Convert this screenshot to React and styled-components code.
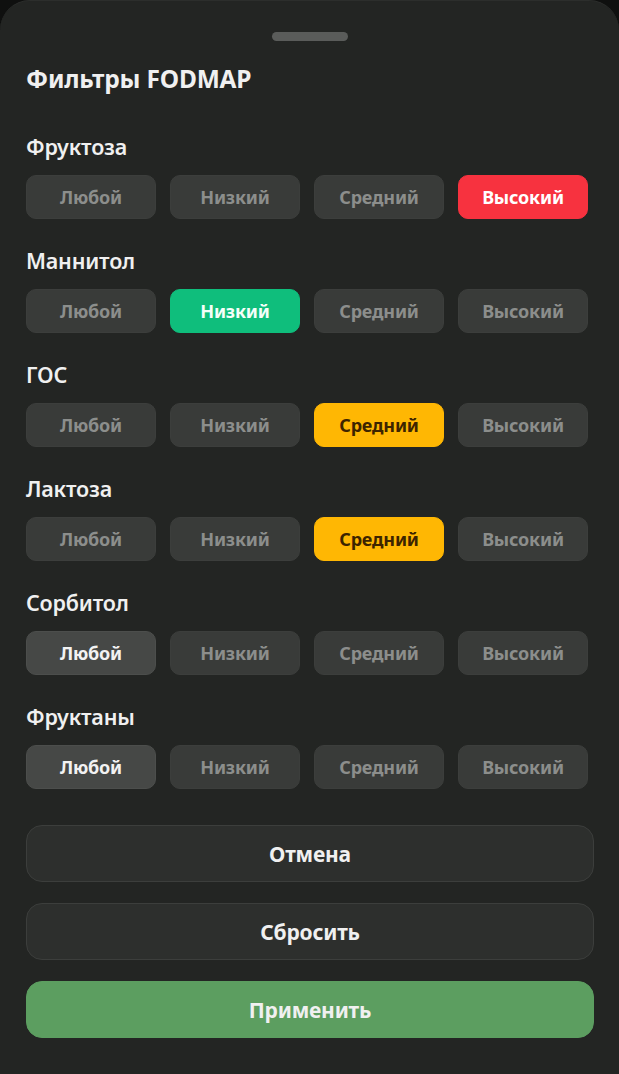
import React from "react";
import styled, { createGlobalStyle } from "styled-components";

const GlobalStyle = createGlobalStyle`
  html, body {
    margin: 0;
    padding: 0;
    background: #0f100f;
  }
  * {
    box-sizing: border-box;
  }
`;

const filters = [
  { name: "Фруктоза", value: "high" },
  { name: "Маннитол", value: "low" },
  { name: "ГОС", value: "mid" },
  { name: "Лактоза", value: "mid" },
  { name: "Сорбитол", value: "any" },
  { name: "Фруктаны", value: "any" },
];

const levels = [
  { key: "any", label: "Любой" },
  { key: "low", label: "Низкий" },
  { key: "mid", label: "Средний" },
  { key: "high", label: "Высокий" },
];

const App = () => (
  <>
    <GlobalStyle />
    <Sheet>
      <Handle />
      <Title>Фильтры FODMAP</Title>
      <Sections>
        {filters.map(f => (
          <Section key={f.name}>
            <Label>{f.name}</Label>
            <Chips>
              {levels.map(l => (
                <Chip key={l.key} tone={f.value === l.key ? l.key : null}>
                  {l.label}
                </Chip>
              ))}
            </Chips>
          </Section>
        ))}
      </Sections>
      <Actions>
        <ActionButton>Отмена</ActionButton>
        <ActionButton>Сбросить</ActionButton>
        <ActionButton primary>Применить</ActionButton>
      </Actions>
    </Sheet>
  </>
);

export default App;

const chipTones = {
  any: `background: #464846; color: #f2f2f2; border-color: #4c4e4c;`,
  low: `background: #0fbe7c; color: #f4fff9; border-color: #0fbe7c;`,
  mid: `background: #ffb703; color: #3d2400; border-color: #ffb703;`,
  high: `background: #f7323f; color: #fff; border-color: #f7323f;`,
};

const Sheet = styled.div`
  min-height: 1074px;
  background: #232523;
  border-radius: 30px 30px 0 0;
  border-top: 1px solid #2c2e2c;
  padding: 31px 25px 30px 26px;
  font-family: "Noto Sans", "Open Sans", sans-serif;
  display: flex;
  flex-direction: column;
`;

const Handle = styled.div`
  align-self: center;
  width: 76px;
  height: 9px;
  border-radius: 5px;
  background: #5a5c5a;
`;

const Title = styled.h1`
  margin: 23px 0 0;
  font-size: 24.5px;
  font-weight: 700;
  line-height: 30px;
  color: #f0f0f0;
  letter-spacing: -0.2px;
`;

const Sections = styled.div`
  margin-top: 41px;
  display: flex;
  flex-direction: column;
  gap: 30px;
`;

const Section = styled.div`
  display: flex;
  flex-direction: column;
  gap: 16px;
`;

const Label = styled.div`
  font-size: 21.5px;
  font-weight: 600;
  line-height: 24px;
  color: #f0f0f0;
  letter-spacing: -0.2px;
`;

const Chips = styled.div`
  display: grid;
  grid-template-columns: repeat(4, 130px);
  gap: 14px;
`;

const Chip = styled.button`
  height: 44px;
  border-radius: 10px;
  border: 1px solid #3c3e3c;
  background: #393b39;
  color: #8c8e8c;
  font-family: inherit;
  font-size: 18px;
  font-weight: 700;
  letter-spacing: -0.2px;
  padding: 0;
  ${p => p.tone && chipTones[p.tone]}
`;

const Actions = styled.div`
  margin-top: 36px;
  display: flex;
  flex-direction: column;
  gap: 21px;
`;

const ActionButton = styled.button`
  height: 57px;
  width: 100%;
  border-radius: 16px;
  border: 1px solid ${p => (p.primary ? "#5c9e60" : "#3c3e3c")};
  background: ${p => (p.primary ? "#5c9e60" : "#2d2f2d")};
  color: #f0f0f0;
  font-family: inherit;
  font-size: 21px;
  font-weight: 700;
  letter-spacing: -0.2px;
`;
